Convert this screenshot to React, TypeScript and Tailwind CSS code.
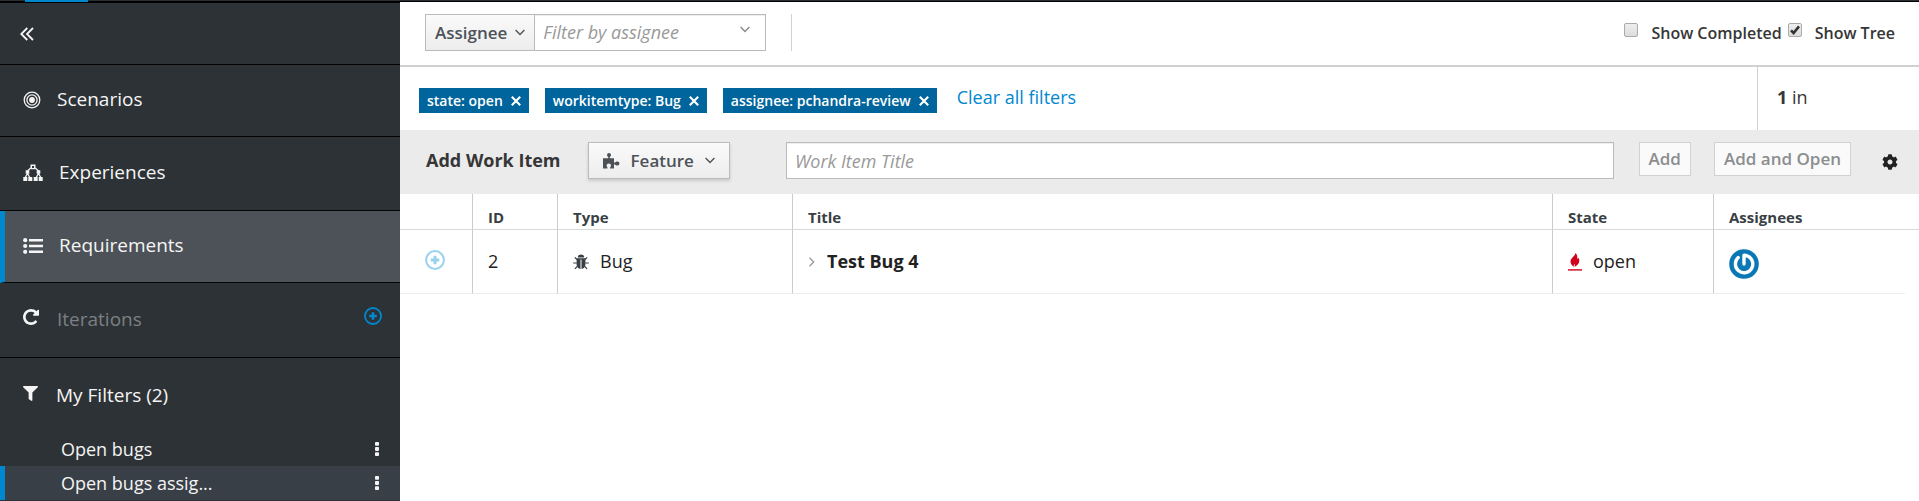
import React, { useState } from 'react';
import { FaFilter, FaCog } from 'react-icons/fa';

const REPEAT =
  'M1536 256v448q0 26-19 45t-45 19h-448q-42 0-59-40-17-39 14-69l138-138q-148-137-349-137-104 0-198.5 40.5t-163.5 109.5-109.5 163.5-40.5 198.5 40.5 198.5 109.5 163.5 163.5 109.5 198.5 40.5q119 0 225-52t179-147q7-10 23-12 15 0 25 9l137 138q9 8 9.5 20.5t-7.5 22.5q-109 132-264 204.5t-327 72.5q-156 0-298-61t-245-164-164-245-61-298 61-298 164-245 245-164 298-61q147 0 284.5 55.5t244.5 156.5l130-129q29-31 70-14 39 17 39 59z';

function ChevronsLeft() {
  return (
    <svg viewBox="0 0 14 14" className="h-[14px] w-[14px]" fill="none" stroke="currentColor" strokeWidth="1.8">
      <path d="M7.3 1 1.3 7l6 6M13 1 7 7l6 6" />
    </svg>
  );
}

function Target() {
  return (
    <svg viewBox="0 0 18 18" className="h-[18px] w-[18px]" fill="none" stroke="currentColor">
      <circle cx="9" cy="9" r="7.8" strokeWidth="1.3" />
      <circle cx="9" cy="9" r="5.1" strokeWidth="1.3" />
      <circle cx="9" cy="9" r="2.9" fill="currentColor" stroke="none" />
    </svg>
  );
}

function Hierarchy() {
  return (
    <svg viewBox="0 0 20 18" className="h-[18px] w-5" fill="currentColor">
      <path d="M7.5.5h5v4.800h-5zM9 1.900v2h2v-2z" fillRule="evenodd" />
      <path d="M7.700 3.900 4.500 7M12.300 3.900 15.500 7M4.500 7v3M15.500 7v3M2.200 13.500 4.500 9.500 6.800 13.500M13.200 13.500l2.300-4 2.300 4" fill="none" stroke="currentColor" strokeWidth="1.300" />
      <path d="M2.700 6.200h3.600v3.600H2.700zM13.700 6.200h3.600v3.600h-3.600zM.3 13h4v4h-4zM5.300 13h4v4h-4zM10.700 13h4v4h-4zM15.700 13h4v4h-4z" />
    </svg>
  );
}

function List() {
  return (
    <svg viewBox="0 0 20 16" className="h-4 w-5" fill="currentColor">
      <circle cx="2.200" cy="2.200" r="2.100" />
      <circle cx="2.200" cy="8" r="2.100" />
      <circle cx="2.200" cy="13.800" r="2.100" />
      <path d="M6 1h14v2.600H6zM6 6.700h14v2.600H6zM6 12.400h14V15H6z" />
    </svg>
  );
}

function Repeat() {
  return (
    <svg viewBox="0 128 1536 1536" className="h-4 w-4" fill="currentColor">
      <path d={REPEAT} />
    </svg>
  );
}

function PlusCircle({ className }: { className: string }) {
  return (
    <svg viewBox="0 0 20 20" className={className} fill="none" stroke="currentColor">
      <circle cx="10" cy="10" r="8.900" strokeWidth="2" />
      <path d="M10 5.700v8.600M5.700 10h8.600" strokeWidth="3" />
    </svg>
  );
}

function Chevron({ className }: { className: string }) {
  return (
    <svg viewBox="0 0 10 7" className={className} fill="none" stroke="currentColor" strokeWidth="1.4">
      <path d="M.6 1 5 5.4 9.4 1" />
    </svg>
  );
}

function Kebab() {
  return (
    <svg viewBox="0 0 4 14" className="h-[14px] w-1" fill="currentColor">
      <rect width="4" height="3.8" rx=".8" />
      <rect y="5.1" width="4" height="3.8" rx=".8" />
      <rect y="10.2" width="4" height="3.8" rx=".8" />
    </svg>
  );
}

function Puzzle() {
  return (
    <svg viewBox="0 0 17 16" className="h-4 w-[17px]" fill="currentColor">
      <path d="M0 5.200h4.600c.7 0 .9-.4.7-1C4.900 3.500 4 3 4 2a2 2 0 0 1 4 0c0 1-.9 1.500-1.200 2.200-.2.600 0 1 .7 1H11v3.800c0 .8.500.9 1 .6.800-.5 1.300-1.100 2.400-1.100a2 2 0 0 1 0 4.100c-1.100 0-1.600-.6-2.400-1.100-.5-.3-1-.2-1 .6V15.600H7.900c-.8 0-1-.5-.7-1.100.3-.6.800-1 .8-1.900a2.200 2 0 0 0-4.400 0c0 .9.500 1.300.8 1.900.3.600.1 1.100-.7 1.100H0z" />
    </svg>
  );
}

function Bug() {
  return (
    <svg viewBox="0 0 16 16" className="h-4 w-4" fill="currentColor">
      <path d="M4.8 3.400a3.200 3 0 0 1 6.400 0z" />
      <path d="M3.600 4.300h8.800v6.200c0 2.500-1.600 4.300-3.900 4.500V5.500h-1V15c-2.300-.2-3.900-2-3.900-4.500z" />
      <path d="M4 5.500 1.800 3.300M12 5.500l2.200-2.200M3.800 9H.2M12.200 9h3.600M4.300 12.300l-2.400 2.500M11.700 12.300l2.400 2.500" fill="none" stroke="currentColor" strokeWidth="1.200" />
    </svg>
  );
}

function Flame() {
  return (
    <svg viewBox="0 0 14 18" className="h-[18px] w-[14px] text-[#d1001c]" fill="currentColor">
      <path d="M7.500 0c-.3 3.200-5 4.800-5 8.600 0 2.400 1.500 3.700 3.200 5.400-.2-1.400.2-2 .9-2.900.4.700.3 1.600-.1 2.900 2.800-1.700 4.800-3.400 4.800-6.200 0-1.200-.3-2.200-.7-3-.3.700-.7 1.100-1.400 1.300C9.700 3.700 9 1.500 7.500 0z" />
      <path d="M0 16.200h14v1.400H0z" />
    </svg>
  );
}

function Avatar() {
  return (
    <svg viewBox="0 0 30 30" className="mt-1 h-[30px] w-[30px]" role="img" aria-label="pchandra-review">
      <circle cx="15" cy="15" r="14.800" fill="#0a78b5" />
      <path d="M9.200 8.600a8.700 8.700 0 1 0 9.300-1.600Q17 6.300 15 6.300V15" fill="none" stroke="#fff" strokeWidth="3.400" strokeLinecap="round" strokeLinejoin="round" />
    </svg>
  );
}

function NavItem({ icon, label, className }: { icon: React.ReactNode; label: string; className: string }) {
  return (
    <a href="#" className={`flex items-center gap-4 border-b border-[#050505] pb-[2px] ${className}`}>
      {icon}
      <span>{label}</span>
    </a>
  );
}

function SavedFilter({ label, active }: { label: string; active?: boolean }) {
  return (
    <li className={`flex h-[34px] items-center justify-between border-l-[5px] pr-[21px] pl-14 ${active ? 'border-[#0088ce] bg-[#393f46]' : 'border-transparent'}`}>
      <a href="#" className="text-[18px]">{label}</a>
      <button type="button" aria-label={`${label} menu`}><Kebab /></button>
    </li>
  );
}

function Chip({ label }: { label: string }) {
  return (
    <li className="flex h-[25px] items-center gap-2 bg-[#00659c] px-2 text-[14px] font-semibold text-white">
      {label}
      <button type="button" aria-label={`Remove ${label}`}>
        <svg viewBox="0 0 10 10" className="h-[10px] w-[10px]" stroke="currentColor" strokeWidth="2.100"><path d="M.8.800 9.200 9.200M9.200.800.8 9.200" /></svg>
      </button>
    </li>
  );
}

function Check({ checked, onChange }: { checked: boolean; onChange: (v: boolean) => void }) {
  return (
    <span className="mb-[6px] grid h-[14px] w-[14px]">
      <input
        type="checkbox"
        checked={checked}
        onChange={(e) => onChange(e.target.checked)}
        className="col-start-1 row-start-1 h-[14px] w-[14px] appearance-none rounded-[2px] border border-[#aaa] bg-linear-to-b from-[#eee] to-[#dcdcdc]"
      />
      {checked && (
        <svg viewBox="0 0 14 14" className="pointer-events-none col-start-1 row-start-1" fill="none" stroke="#333" strokeWidth="2.6">
          <path d="M3 7.3 5.600 10 11 3.400" />
        </svg>
      )}
    </span>
  );
}

const th = 'h-9 border-b border-[#d9d9d9] px-[15px] pt-[10px] text-left text-[15px] leading-5 font-bold text-[#393f44]';
const td = 'h-[64px] border-b border-[#ededed] px-[15px]';
const line = 'border-r border-r-[#cccccc]';

export default function App() {
  const [completed, setCompleted] = useState(false);
  const [tree, setTree] = useState(true);
  return (
    <div className="flex min-h-screen flex-col bg-white font-['Open_Sans','Noto_Sans',sans-serif] text-[18px] text-[#363636]">
      <header className="h-[2px] border-b border-black bg-[#292e34] pl-[25px]">
        <div className="h-[2px] w-[63px] bg-[#0088ce]" />
      </header>
      <div className="flex flex-1">
        <nav className="flex w-[400px] shrink-0 flex-col border-t border-black bg-[#2d3236] text-[19px] text-[#f5f5f5]">
          <button type="button" aria-label="Collapse" className="flex h-[62px] items-center border-b border-[#050505] pl-5"><ChevronsLeft /></button>
          <NavItem icon={<Target />} label="Scenarios" className="h-[72px] pl-[23px]" />
          <NavItem icon={<Hierarchy />} label="Experiences" className="h-[74px] pl-[23px]" />
          <NavItem icon={<List />} label="Requirements" className="h-[72px] border-l-[5px] border-l-[#0088ce] bg-[#4d5258] pl-[18px]" />
          <div className="flex h-[75px] items-center gap-[18px] border-b border-[#050505] pr-[18px] pb-[2px] pl-[23px]">
            <span className="pb-1"><Repeat /></span>
            <span className="flex-1 text-[#7c8083]">Iterations</span>
            <button type="button" aria-label="Add iteration" className="pb-[6px] text-[#0088ce]"><PlusCircle className="h-[18px] w-[18px]" /></button>
          </div>
          <h2 className="flex h-[74px] items-center gap-[18px] pl-[23px]"><FaFilter className="mb-1 h-[15px] w-[15px]" />My Filters (2)</h2>
          <ul>
            <SavedFilter label="Open bugs" />
            <SavedFilter label="Open bugs assig..." active />
          </ul>
        </nav>

        <main className="min-w-0 flex-1">
          <div className="flex h-[65px] items-center justify-between border-b-2 border-[#d1d1d1] pr-6 pb-[2px] pl-[25px]">
            <div className="flex h-[37px]">
              <button type="button" className="flex items-center gap-2 border border-[#bbb] bg-linear-to-b from-[#fafafa] to-[#ededed] px-[9px] text-[17px] font-semibold text-[#4d5258]">
                Assignee <Chevron className="h-[7px] w-[10px]" />
              </button>
              <div className="flex w-[231px] items-center border border-l-0 border-[#bbb] pr-[15px] shadow-[inset_0_1px_1px_rgba(3,3,3,0.075)]">
                <input aria-label="Filter by assignee" placeholder="Filter by assignee" className="min-w-0 flex-1 bg-transparent px-2 outline-none placeholder:text-[#999] placeholder:italic" />
                <Chevron className="mb-[6px] h-[7px] w-[10px] text-[#888]" />
              </div>
              <div className="ml-[25px] w-px bg-[#d1d1d1]" />
            </div>
            <div className="flex items-center gap-[6px] text-[16px] font-semibold">
              <label className="flex items-center gap-[13px]"><Check checked={completed} onChange={setCompleted} />Show Completed</label>
              <label className="flex items-center gap-[13px]"><Check checked={tree} onChange={setTree} />Show Tree</label>
            </div>
          </div>

          <div className="flex h-[63px] items-center pl-[19px]">
            <ul className="flex gap-4 pt-1">
              <Chip label="state: open" />
              <Chip label="workitemtype: Bug" />
              <Chip label="assignee: pchandra-review" />
            </ul>
            <a href="#" className="ml-5 flex-1 pb-[2px] text-[#0088ce]">Clear all filters</a>
            <p className="flex h-full w-[162px] items-center border-l border-[#d1d1d1] pb-[2px] pl-[19px]"><span><b>1</b> in</span></p>
          </div>

          <form className="flex h-16 items-start bg-[#ebebeb] pt-3 pr-[21px] pl-[26px]">
            <label htmlFor="title" className="leading-9 font-bold">Add Work Item</label>
            <button type="button" className="ml-[27px] flex h-[37px] items-center gap-[11px] border border-[#bbb] bg-linear-to-b from-[#fafafa] to-[#ededed] px-[14px] text-[17px] font-semibold text-[#4d5258] shadow-[0_2px_3px_rgba(3,3,3,0.15)]">
              <Puzzle />Feature<Chevron className="h-[7px] w-[10px]" />
            </button>
            <input id="title" placeholder="Work Item Title" className="ml-14 h-[37px] min-w-0 flex-1 border border-[#bbb] bg-white px-2 shadow-[inset_0_1px_1px_rgba(3,3,3,0.075)] outline-none placeholder:text-[#999] placeholder:italic" />
            <button type="button" className="ml-[25px] h-[34px] border border-[#d1d1d1] bg-[#fafafa] px-[9px] text-[17px] font-semibold text-[#8b8d8f]">Add</button>
            <button type="button" className="mr-[31px] ml-[23px] h-[34px] border border-[#d1d1d1] bg-[#fafafa] px-[9px] text-[17px] font-semibold text-[#8b8d8f]">Add and Open</button>
            <button type="button" aria-label="Settings" className="mt-3 text-[#222]"><FaCog className="h-4 w-4" /></button>
          </form>

          <table className="w-full table-fixed border-separate border-spacing-0 text-[#222]">
            <colgroup>
              <col className="w-[73px]" /><col className="w-[85px]" /><col className="w-[235px]" /><col /><col className="w-[161px]" /><col className="w-[191px]" /><col className="w-[14px]" />
            </colgroup>
            <thead>
              <tr>
                <th className={`${th} ${line}`} /><th className={`${th} ${line}`}>ID</th><th className={`${th} ${line}`}>Type</th><th className={`${th} ${line}`}>Title</th><th className={`${th} ${line}`}>State</th><th className={th}>Assignees</th><th className="border-b border-[#d9d9d9]" />
              </tr>
            </thead>
            <tbody>
              <tr>
                <td className={`${td} ${line}`}><button type="button" aria-label="Add child" className="mb-[3px] ml-[10px] block text-[#99d2ee]"><PlusCircle className="h-5 w-5" /></button></td>
                <td className={`${td} ${line}`}>2</td>
                <td className={`${td} ${line}`}><span className="flex items-center gap-[11px]"><span className="text-[#393f44]"><Bug /></span>Bug</span></td>
                <td className={`${td} ${line}`}>
                  <span className="flex items-center gap-[11px] font-bold">
                    <svg viewBox="0 0 8 10" className="h-[10px] w-2 text-[#999]" fill="none" stroke="currentColor" strokeWidth="1.3"><path d="M1.5.800 5.700 5 1.500 9.200" /></svg>
                    Test Bug 4
                  </span>
                </td>
                <td className={`${td} ${line}`}><span className="flex items-center gap-[11px]"><Flame />open</span></td>
                <td className={td}><Avatar /></td>
                <td />
              </tr>
            </tbody>
          </table>
        </main>
      </div>
    </div>
  );
}
